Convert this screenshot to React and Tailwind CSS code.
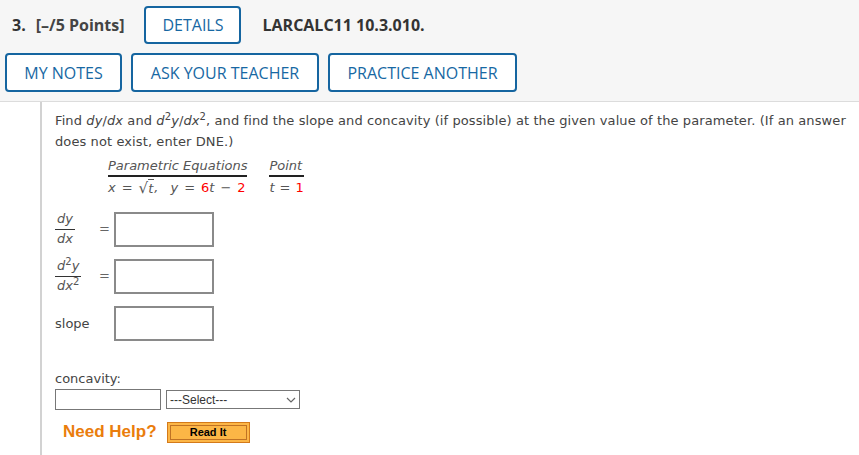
import React from "react";

const blueBtn =
  "h-[39px] border-2 border-[#1565a0] rounded-[4px] text-[#1768a3] text-[16px] bg-white flex items-center justify-center";

function Frac({ top, bottom }) {
  return (
    <span className="inline-flex flex-col items-center italic text-[#555] text-[13px] leading-[16px]">
      <span className="px-[2px] pb-[2px] border-b border-[#333]">{top}</span>
      <span className="pt-[1px]">{bottom}</span>
    </span>
  );
}

function AnswerBox() {
  return <div className="w-[100px] h-[35px] border-2 border-[#8a8a8a] bg-white" />;
}

export default function App() {
  return (
    <div className="w-[859px] h-[455px] bg-white overflow-hidden text-[#333]">
      {/* Header */}
      <div className="bg-[#f6f6f6] border-b border-[#dcdcdc] h-[102px] pt-[6px] pl-[5px]" style={{ fontFamily: '"Open Sans", sans-serif' }}>
        <div className="flex items-center h-[38px]">
          <span className="ml-[7px] font-bold text-[16px] text-[#333]">3.</span>
          <span className="ml-[10px] font-bold text-[16px] text-[#444]">[–/5 Points]</span>
          <div className="ml-[20px] h-[38px] w-[97px] border-2 border-[#1565a0] rounded-[4px] text-[#1768a3] text-[16px] bg-white flex items-center justify-center">
            DETAILS
          </div>
          <span className="ml-[21px] font-bold text-[16px] text-[#333]">LARCALC11 10.3.010.</span>
        </div>
        <div className="flex mt-[9px] gap-[9px]">
          <div className={blueBtn + " w-[117px]"}>MY NOTES</div>
          <div className={blueBtn + " w-[188px]"}>ASK YOUR TEACHER</div>
          <div className={blueBtn + " w-[189px]"}>PRACTICE ANOTHER</div>
        </div>
      </div>

      {/* Body */}
      <div className="ml-[40px] border-l-2 border-[#d2d2d2] pl-[13px] pt-[8px] h-[353px] text-[13px] text-[#444]" style={{ fontFamily: '"DejaVu Sans", Verdana, sans-serif' }}>
        <p className="leading-[21px] text-[13px] tracking-[0.1px]">
          Find <i>dy</i>/<i>dx</i> and <i>d</i><sup className="text-[10px]">2</sup><i>y</i>/<i>dx</i><sup className="text-[10px]">2</sup>, and find the slope and concavity (if possible) at the given value of the parameter. (If an answer does not exist, enter DNE.)
        </p>

        <div className="ml-[53px] mt-[6px] flex gap-[22px] text-[13px] text-[#555]">
          <div className="flex flex-col">
            <span className="italic border-b-2 border-[#222] pb-[1px] leading-[16px]">Parametric Equations</span>
            <span className="italic leading-[22px] flex items-end whitespace-nowrap">
              <span>x</span>
              <span className="not-italic mx-[6px]">=</span>
              <span className="not-italic text-[15px] leading-[21px]">√</span>
              <span className="border-t border-[#555] leading-[17px] pr-[1px] mb-[2px]">t</span>
              <span>,</span>
              <span className="ml-[12px]">y</span>
              <span className="not-italic mx-[6px]">=</span>
              <span className="not-italic text-[#f00]">6</span>
              <span>t</span>
              <span className="not-italic mx-[6px]">−</span>
              <span className="not-italic text-[#f00]">2</span>
            </span>
          </div>
          <div className="flex flex-col">
            <span className="italic border-b-2 border-[#222] pb-[1px] leading-[16px]">Point</span>
            <span className="italic leading-[22px] whitespace-nowrap">
              t<span className="not-italic mx-[5px]">=</span><span className="not-italic text-[#f00]">1</span>
            </span>
          </div>
        </div>

        <div className="mt-[12px] flex items-center">
          <div className="w-[44px] flex"><Frac top="dy" bottom="dx" /></div>
          <span className="text-[#666] w-[15px]">=</span>
          <AnswerBox />
        </div>
        <div className="mt-[11px] flex items-center">
          <div className="w-[44px] flex">
            <Frac
              top={<>d<sup className="not-italic text-[10px]">2</sup>y</>}
              bottom={<>dx<sup className="not-italic text-[10px]">2</sup></>}
            />
          </div>
          <span className="text-[#666] w-[15px]">=</span>
          <AnswerBox />
        </div>
        <div className="mt-[12px] flex items-center">
          <span className="w-[59px] text-[#444]">slope</span>
          <AnswerBox />
        </div>

        <div className="mt-[30px] leading-[16px] text-[#444]">concavity:</div>
        <div className="mt-[2px] flex items-center gap-[5px]">
          <div className="w-[106px] h-[21px] border border-[#777] bg-white" />
          <div className="w-[134px] h-[19px] border border-[#777] bg-white flex items-center justify-between px-[3px] text-[12px] text-[#333]" style={{ fontFamily: '"Liberation Sans", Arial, sans-serif' }}>
            <span>---Select---</span>
            <svg width="10" height="6" viewBox="0 0 10 6" fill="none" stroke="#666" strokeWidth="1.2"><path d="M1 1l4 4 4-4" /></svg>
          </div>
        </div>

        <div className="mt-[10px] ml-[8px] flex items-center h-[24px]" style={{ fontFamily: '"Liberation Sans", Arial, sans-serif' }}>
          <span className="text-[#ea7d0c] font-bold text-[17px] leading-[20px]">Need Help?</span>
          <div className="ml-[10px] w-[83px] h-[21px] bg-[#fcb646] border border-[#d47a1a] p-[2px] flex">
            <div className="flex-1 border border-[#c07224] flex items-center justify-center text-[11px] font-bold text-black">Read It</div>
          </div>
        </div>
      </div>
    </div>
  );
}
